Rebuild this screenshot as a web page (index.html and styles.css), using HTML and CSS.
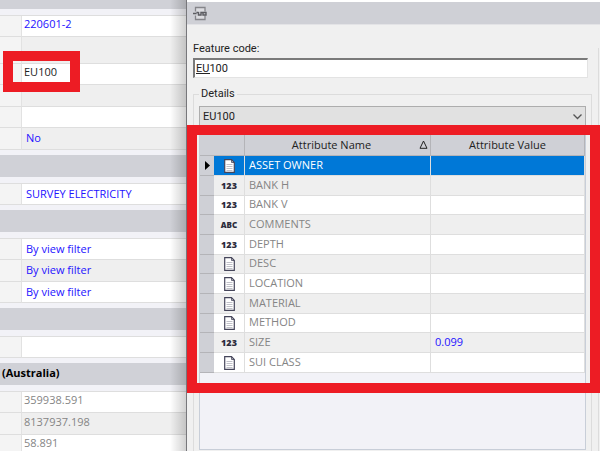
FILE: index.html
```html
<!DOCTYPE html>
<html lang="en">
<head>
  <meta charset="UTF-8">
  <title>Feature Properties</title>
  <link rel="stylesheet" href="styles.css">
</head>
<body>

  <!-- Property list -->
  <div class="properties">
    <div class="section first"></div>
    <table class="props">
      <tr><th></th><td class="near">220601-2</td></tr>
      <tr class="tall"><th></th><td></td></tr>
      <tr><th></th><td class="near code">EU100</td></tr>
      <tr><th></th><td></td></tr>
      <tr><th></th><td></td></tr>
      <tr><th></th><td>No</td></tr>
    </table>
    <div class="section"></div>
    <table class="props">
      <tr><th></th><td>SURVEY ELECTRICITY</td></tr>
    </table>
    <div class="section"></div>
    <table class="props">
      <tr><th></th><td>By view filter</td></tr>
      <tr><th></th><td>By view filter</td></tr>
      <tr><th></th><td>By view filter</td></tr>
    </table>
    <div class="section"></div>
    <table class="props">
      <tr><th></th><td></td></tr>
    </table>
    <div class="section">(Australia)</div>
    <table class="props">
      <tr><th></th><td class="near muted">359938.591</td></tr>
      <tr><th></th><td class="near muted">8137937.198</td></tr>
      <tr><th></th><td class="near muted">58.891</td></tr>
    </table>
    <div class="mark mark-code"></div>
  </div>

  <!-- Feature code dialog -->
  <div class="dialog">
    <div class="toolbar">
      <button class="tool" aria-label="Options">
        <svg width="15" height="15" viewBox="0 0 15 15" fill="none">
          <path d="M2.500 5.500V1.500h9.500v4M2.500 9.500v4h9.500v-4" fill="#dcdce0" stroke="#85858a" stroke-width="1.300"/>
          <path d="M0 7.500h3.500M5.500 6v3h2.500V6.500h2v2.500h3V6.500h-2.500M3.500 6.500h2" stroke="#5c5c61" stroke-width="1.400"/>
        </svg>
      </button>
    </div>

    <div class="form">
      <label for="featureCode">Feature code:</label>
      <div class="code-box"><input id="featureCode" type="text" value="EU100"></div>

      <fieldset class="details">
        <legend>Details</legend>
        <div class="select-box">
          <select aria-label="Details">
            <option>EU100</option>
          </select>
          <svg class="chevron" width="9" height="6" viewBox="0 0 9 6" fill="none" stroke="#555"><path d="M.5.5l4 4 4-4" stroke-width="1.300"/></svg>
        </div>

        <div class="grid">
          <table class="attributes">
            <thead>
              <tr>
                <th class="col-mark"></th>
                <th class="col-icon"></th>
                <th class="col-name">Attribute Name
                  <svg class="sort" width="9" height="9" viewBox="0 0 9 9" fill="none" stroke="#222"><path d="M4.500 1L8 8.300H1z"/></svg>
                </th>
                <th>Attribute Value</th>
              </tr>
            </thead>
            <tbody id="rows"></tbody>
          </table>
          <div class="mark mark-grid"></div>
        </div>
      </fieldset>
    </div>
    <div class="edge"></div>
  </div>

  <script>
    const attributes = [
      ['list', 'ASSET OWNER', ''],
      ['123', 'BANK H', ''],
      ['123', 'BANK V', ''],
      ['ABC', 'COMMENTS', ''],
      ['123', 'DEPTH', ''],
      ['list', 'DESC', ''],
      ['list', 'LOCATION', ''],
      ['list', 'MATERIAL', ''],
      ['list', 'METHOD', ''],
      ['123', 'SIZE', '0.099'],
      ['list', 'SUI CLASS', '']
    ];

    const listIcon = `<svg width="11" height="14" viewBox="0 0 11 14">
      <path d="M.7.7h6.800l2.800 2.800v9.800H.7z" fill="#fff" stroke="#45455a" stroke-width="1.200"/>
      <path d="M7.500 1v2.500H10" fill="none" stroke="#45455a" stroke-width=".8"/>
      <path d="M2.500 5.500h6M2.500 7.500h6M2.500 9.500h6M2.500 11.500h6" stroke="#c0c0c8"/>
    </svg>`;
    const arrow = '<svg width="5" height="9" viewBox="0 0 5 9"><path d="M0 0l5 4.500L0 9z"/></svg>';

    document.getElementById('rows').innerHTML = attributes.map(([type, name, value], i) => {
      const icon = type === 'list' ? listIcon : `<span class="type type-${type}">${type}</span>`;
      return `<tr class="${i === 0 ? 'selected' : ''}">
        <th>${i === 0 ? arrow : ''}</th>
        <td class="icon">${icon}</td>
        <td>${name}</td>
        <td class="value">${value}</td>
      </tr>`;
    }).join('');
  </script>

</body>
</html>
```
FILE: styles.css
```css
* {
  box-sizing: border-box;
}
body {
  margin: 0;
  height: 100vh;
  display: flex;
  overflow: hidden;
  background: #f0f0f0;
  font-family: "Open Sans", "Noto Sans", sans-serif;
  font-size: 11px;
}
table {
  width: 100%;
  border-collapse: separate;
  border-spacing: 0;
  table-layout: fixed;
}
th, td {
  padding: 0;
  font-weight: normal;
  white-space: nowrap;
}

/* Property list */
.properties {
  position: relative;
  flex: 0 0 187px;
  height: 100vh;
  overflow: hidden;
  background: #f2f2f7;
  border-right: 1px solid #77777b;
}
.properties::after {
  content: "";
  position: absolute;
  inset: 0 0 0 auto;
  width: 16px;
  background: linear-gradient(to right, rgba(0, 0, 0, 0), rgba(0, 0, 0, 0.18));
}
.section {
  height: 22px;
  margin: 5px 0 6px;
  padding-left: 2px;
  background: #d0d1d7;
  font-weight: bold;
  line-height: 20px;
}
.section.first {
  height: 9px;
  margin-top: 0;
}
.props {
  border-top: 1px solid #dedede;
}
.props th {
  width: 22px;
  background: #f4f4f4;
  border-right: 1px solid #e2e2e2;
  border-bottom: 1px solid #dedede;
}
.props td {
  height: 21px;
  padding: 0 0 1px 4px;
  background: #fff;
  border-bottom: 1px solid #dedede;
  color: #2412ff;
  line-height: 16px;
}
.props tr:nth-child(even) td {
  height: 22px;
  background: #efefef;
}
.props tr.tall td {
  height: 27px;
}
.props td.near {
  padding-left: 2px;
  padding-bottom: 4px;
}
.props td.muted {
  color: #858585;
}
.props td.code {
  color: #222;
}

/* Red highlight frames */
.mark {
  position: absolute;
  z-index: 2;
  border: 10px solid #ed1c24;
  pointer-events: none;
}
.mark-code {
  top: 51px;
  left: 3px;
  width: 77px;
  height: 41px;
}
.mark-grid {
  inset: -9px -15px auto -13px;
  height: 268px;
}

/* Dialog */
.dialog {
  flex: 1;
  min-width: 0;
  height: 100vh;
  display: grid;
  grid-template: auto 1fr / 1fr 2px;
  overflow: hidden;
  border-top: 2px solid #fff;
  font-family: Roboto, "Liberation Sans", sans-serif;
  font-size: 11px;
  color: #222;
}
.toolbar {
  grid-column: 1 / -1;
  height: 23px;
  padding: 4px 6px;
  background: #cfd0d6;
  border-bottom: 1px solid #e3e3e6;
}
.tool {
  display: block;
  padding: 0;
  border: none;
  background: none;
}
.tool svg {
  display: block;
}
.form {
  min-width: 0;
  display: flex;
  flex-direction: column;
  padding: 16px 6px 0;
}
.form label {
  line-height: 16px;
}
.code-box {
  margin: 1px 4px 0 0;
}
/* the matched prefix of the code is underlined */
.code-box input {
  display: block;
  width: 100%;
  height: 20px;
  padding: 0 1px;
  border: 1px solid #e3e3e3;
  border-top: 2px solid #7a7a7a;
  border-left: 2px solid #7a7a7a;
  background: #fff linear-gradient(#222, #222) 1px 13px / 14px 1px no-repeat;
  color: #222;
  font: inherit;
  outline: none;
}
.edge {
  margin-top: 23px;
  border-left: 1px solid #dcdcdc;
}
.details {
  flex: 1;
  min-width: 0;
  display: flex;
  flex-direction: column;
  margin: 8px 0 0;
  padding: 4px 5px 0;
  border: 1px solid #dcdcdc;
  border-bottom: none;
}
.details legend {
  padding: 0 2px;
  line-height: 16px;
}
.select-box {
  position: relative;
}
.select-box select {
  display: block;
  width: 100%;
  height: 21px;
  padding: 0 3px;
  appearance: none;
  border: 1px solid #adadad;
  border-radius: 0;
  background: #e1e1e1;
  color: #222;
  font: inherit;
}
.chevron {
  position: absolute;
  top: 8px;
  right: 4px;
}

/* Attribute grid */
.grid {
  position: relative;
  height: 316px;
  margin-top: 7px;
  border: 1px solid #c8ced8;
  border-top: none;
  background: #f2f2f7;
  font-family: "Open Sans", "Noto Sans", sans-serif;
  font-size: 11px;
}
.attributes thead th {
  height: 22px;
  background: #cfd0d6;
  border-right: 1px solid #b4b4b8;
  border-bottom: 1px solid #b4b4b8;
}
.attributes .col-mark {
  width: 14px;
  border-right: none;
}
.attributes .col-icon {
  width: 31px;
}
.attributes .col-name {
  position: relative;
  width: 186px;
  padding-right: 12px;
}
.sort {
  position: absolute;
  top: 6px;
  right: 2px;
}
.attributes tbody th {
  background: #cfd0d6;
  border-bottom: 1px solid #b4b4b8;
}
.attributes td {
  height: 20px;
  padding: 0 0 2px 4px;
  background: #fff;
  border-right: 1px solid #dedede;
  border-bottom: 1px solid #dedede;
  color: #858585;
  line-height: 16px;
}
.attributes tbody tr:nth-child(3n) td {
  height: 19px;
}
.attributes tr:nth-child(even) td {
  background: #efefef;
}
.attributes td.icon {
  padding: 0;
  text-align: center;
}
.attributes svg {
  display: block;
  margin: 0 auto;
}
.attributes td.value {
  color: #2412ff;
}
.attributes tr.selected td {
  background: #0078d7;
  color: #fff;
}
.type {
  display: block;
  color: #2c2c3c;
  font-size: 9px;
  font-weight: 800;
}
.type-ABC {
  font-size: 8px;
}
```
